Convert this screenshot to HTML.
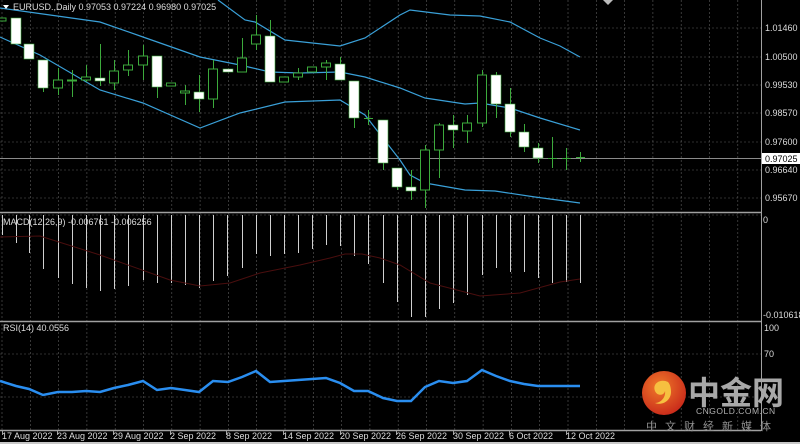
<!DOCTYPE html>
<html><head><meta charset="utf-8"><style>
html,body{margin:0;padding:0;background:#000;width:800px;height:444px;overflow:hidden}
svg{display:block}
text{font-family:"Liberation Sans",sans-serif;font-size:9px;fill:#dcdcdc}
</style></head><body>
<svg width="800" height="444" viewBox="0 0 800 444" xmlns="http://www.w3.org/2000/svg">
<rect width="800" height="444" fill="#000"/>
<g stroke="#5c5c5c" stroke-width="0.6" stroke-dasharray="2,2">
<path d="M2 0V430M30.3 0V430M58.6 0V430M86.9 0V430M115.2 0V430M143.5 0V430M171.8 0V430M200.1 0V430M228.4 0V430M256.7 0V430M285 0V430M313.3 0V430M341.6 0V430M369.9 0V430M398.2 0V430M426.5 0V430M454.8 0V430M483.1 0V430M511.4 0V430M539.7 0V430M568 0V430M596.3 0V430M624.6 0V430M652.9 0V430M681.2 0V430M709.5 0V430M737.8 0V430"/>
<path d="M0 28H761M0 57H761M0 85H761M0 113H761M0 142H761M0 170H761M0 198H761M0 215H761M0 354H761M0 397H761"/>
</g>
<path d="M0 158.5H761" stroke="#8a8a8a" stroke-width="1"/>
<path d="M0 212.5H761M0 321.5H761M0 430.5H761" stroke="#a0a0a0" stroke-width="1.5"/>
<path d="M761.5 0V431" stroke="#a0a0a0" stroke-width="1"/>
<g fill="none" stroke="#3aa0d8" stroke-width="1.2">
<polyline points="218,0 245,20 255,22 285,40 340,46 365,38 400,15 410,10 450,15 480,16 510,22 540,38 560,46 580,57"/>
<polyline points="0,8 50,15 100,22 143,37 200,57 240,65 270,72 300,73 340,72 365,77 400,88 425,98 465,104 480,103 510,108 540,118 580,130"/>
<polyline points="0,37 40,55 100,90 143,103 200,128 240,113 285,102 340,100 365,115 400,160 410,175 425,183 465,190 495,191 535,197 580,203"/>
</g>
<g stroke="#3caa3c" stroke-width="1">
<path d="M43.5 60V92M58.5 68V95M72.5 70V97M86.5 65V82M100.5 44V86M114.5 60V90M128.5 50V76M143.5 45V80M157.5 87V98M185.5 85V105M199.5 75V112M213.5 60V108M242.5 38V72M256.5 15V50M270.5 20V82M298.5 68V80M326.5 60V80M340.5 57V80M354.5 81V128M368.5 110V125M383.5 120V170M397.5 168V190M411.5 170V200M425.5 145V208M439.5 123V178M453.5 115V148M467.5 115V143M482.5 70V127M496.5 72V118M510.5 88V137M524.5 124V152M538.5 143V163M552.5 137V168M566.5 148V170M580.5 152V162"/>
<path d="M364 118.5H373M548 158.5H557M562 158.5H571M576 157.5H585"/>
</g>
<g fill="#000" stroke="#3caa3c" stroke-width="1">
<rect x="-3" y="18" width="9" height="3"/>
<rect x="53.5" y="80" width="9" height="8"/>
<rect x="67.5" y="80" width="9" height="1"/>
<rect x="81.5" y="77" width="9" height="3"/>
<rect x="109.5" y="71" width="9" height="12"/>
<rect x="123.5" y="65" width="9" height="5"/>
<rect x="138.5" y="56" width="9" height="9"/>
<rect x="166.5" y="83" width="9" height="3"/>
<rect x="180.5" y="91" width="9" height="2"/>
<rect x="208.5" y="69" width="9" height="30"/>
<rect x="237.5" y="58" width="9" height="14"/>
<rect x="251.5" y="35" width="9" height="9"/>
<rect x="279.5" y="77" width="9" height="5"/>
<rect x="293.5" y="73" width="9" height="4"/>
<rect x="307.5" y="67" width="9" height="5"/>
<rect x="321.5" y="63" width="9" height="4"/>
<rect x="420.5" y="150" width="9" height="40"/>
<rect x="434.5" y="125" width="9" height="25"/>
<rect x="462.5" y="123" width="9" height="8"/>
<rect x="477.5" y="75" width="9" height="48"/>
</g>
<g fill="#fff" stroke="#3caa3c" stroke-width="0.6">
<rect x="11" y="18" width="10" height="26"/>
<rect x="24" y="44" width="10" height="15"/>
<rect x="38" y="60" width="10" height="28"/>
<rect x="95" y="78" width="10" height="3"/>
<rect x="152" y="56" width="10" height="31"/>
<rect x="194" y="92" width="10" height="7"/>
<rect x="223" y="69" width="10" height="3"/>
<rect x="265" y="36" width="10" height="46"/>
<rect x="335" y="64" width="10" height="16"/>
<rect x="349" y="81" width="10" height="37"/>
<rect x="378" y="120" width="10" height="43"/>
<rect x="392" y="168" width="10" height="19"/>
<rect x="406" y="187" width="10" height="4"/>
<rect x="448" y="125" width="10" height="5"/>
<rect x="491" y="75" width="10" height="29"/>
<rect x="505" y="104" width="10" height="28"/>
<rect x="519" y="132" width="10" height="15"/>
<rect x="533" y="148" width="10" height="10"/>
</g>
<path d="M3 5H9L6 9Z" fill="#fff"/>
<text x="13" y="10">EURUSD.,Daily  0.97053 0.97224 0.96980 0.97025</text>
<path d="M603 0H613L608 5Z" fill="#bbb"/>
<g>
<text x="765" y="31">1.01460</text>
<text x="765" y="60">1.00500</text>
<text x="765" y="88">0.99530</text>
<text x="765" y="116">0.98570</text>
<text x="765" y="145">0.97600</text>
<rect x="762" y="153" width="38" height="11" fill="#fff"/>
<text x="765" y="162" style="fill:#000">0.97025</text>
<text x="765" y="173">0.96640</text>
<text x="765" y="201">0.95670</text>
<text x="763" y="223">0</text>
<text x="763" y="318">-0.010618</text>
<text x="764" y="331">100</text>
<text x="764" y="357">70</text>
</g>
<g stroke="#d0d0d0" stroke-width="1">
<path d="M2.5 215V235M16.5 215V243M29.5 215V253M43.5 215V269M58.5 215V278M72.5 215V284M86.5 215V288M100.5 215V291M114.5 215V289M128.5 215V286M143.5 215V280M157.5 215V283M171.5 215V283M185.5 215V285M199.5 215V288M213.5 215V281M227.5 215V276M242.5 215V268M256.5 215V254M270.5 215V256M284.5 215V254M298.5 215V253M312.5 215V249M326.5 215V245M340.5 215V246M354.5 215V256M368.5 215V264M383.5 215V283M397.5 215V302M411.5 215V317M425.5 215V317M439.5 215V309M453.5 215V303M467.5 215V295M482.5 215V275M496.5 215V268M510.5 215V272M524.5 215V272M538.5 215V278M552.5 215V283M566.5 215V282M580.5 215V283"/>
</g>
<polyline fill="none" stroke="#4a0e0e" stroke-width="1" points="0,237 40,236 100,255 170,280 200,286 230,283 260,273 300,265 330,258 345,254 362,254 380,258 400,265 430,283 480,296 520,293 560,282 580,279"/>
<text x="3" y="225">MACD(12,26,9) -0.006761 -0.006256</text>
<text x="3" y="331">RSI(14) 40.0556</text>
<polyline fill="none" stroke="#2a8ef0" stroke-width="2.5" points="0,381 16,386 29,389 43,395 58,392 72,392 86,391 100,392 114,388 128,385 143,381 157,390 171,388 185,390 199,392 213,381 228,382 242,377 256,371 270,382 284,381 298,380 312,379 326,378 340,383 354,391 368,391 383,398 397,401 411,401 425,387 439,381 453,383 467,381 482,370 496,376 510,381 524,384 538,386 580,386"/>
<g stroke="#a0a0a0"><path d="M2.5 431V435M57.5 431V435M113.5 431V435M170.5 431V435M226.5 431V435M283.5 431V435M340.5 431V435M396.5 431V435M453.5 431V435M509.5 431V435M566.5 431V435"/></g>
<text x="2" y="439">17 Aug 2022</text>
<text x="57" y="439">23 Aug 2022</text>
<text x="113" y="439">29 Aug 2022</text>
<text x="170" y="439">2 Sep 2022</text>
<text x="226" y="439">8 Sep 2022</text>
<text x="283" y="439">14 Sep 2022</text>
<text x="340" y="439">20 Sep 2022</text>
<text x="396" y="439">26 Sep 2022</text>
<text x="453" y="439">30 Sep 2022</text>
<text x="509" y="439">6 Oct 2022</text>
<text x="566" y="439">12 Oct 2022</text>
<rect x="0" y="442" width="800" height="2" fill="#c8c8c8"/>
<defs><radialGradient id="g" cx="0.4" cy="0.35" r="0.7"><stop offset="0" stop-color="#f07a2a"/><stop offset="1" stop-color="#c8281a"/></radialGradient></defs>
<circle cx="664" cy="393" r="22" fill="url(#g)"/>
<path d="M668 382c-8-4-16 2-13 9 2 5 9 5 10 0 1 6-4 12-10 12 8 3 16-3 16-11 0-4-1-8-3-10z" fill="#f6c040"/>
<text x="688" y="404" style="font-family:'Noto Sans CJK SC',sans-serif;font-size:32px;font-weight:bold;fill:#a8a8a8">中金网</text>
<text x="696" y="414" style="font-size:8.5px;fill:#b0b0b0;letter-spacing:0.5px">CNGOLD.COM.CN</text>
<text x="646" y="430" style="font-family:'Noto Sans CJK SC',sans-serif;font-size:11px;fill:#909090;letter-spacing:8px">中文财经新媒体</text>
</svg>
</body></html>
